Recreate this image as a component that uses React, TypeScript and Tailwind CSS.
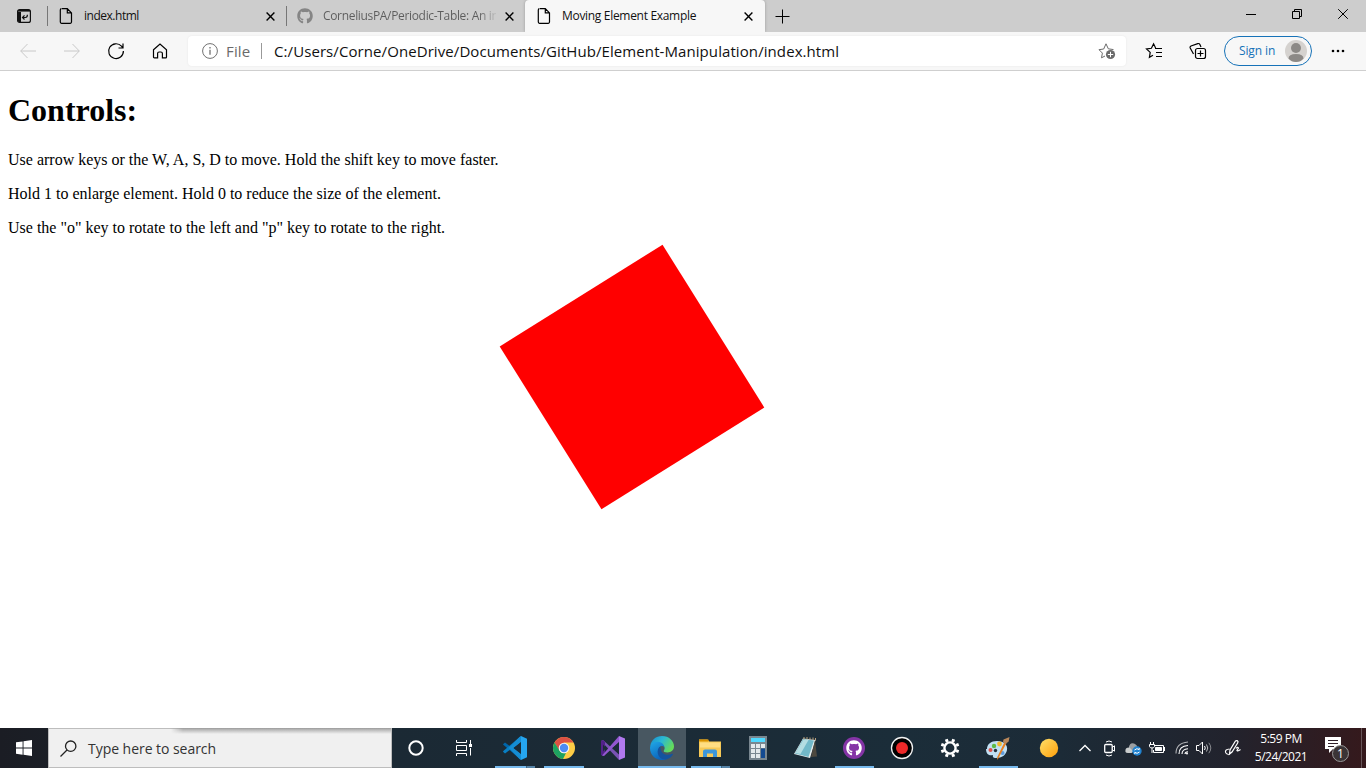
import React from "react";
import { FaGithub } from "react-icons/fa";

type IconProps = {
  w: number;
  h?: number;
  className?: string;
  stroke?: string;
  sw?: number;
  children: React.ReactNode;
};

function Icon({ w, h = w, className = "", stroke = "currentColor", sw = 1, children }: IconProps) {
  return (
    <svg
      width={w}
      height={h}
      viewBox={`0 0 ${w} ${h}`}
      fill="none"
      stroke={stroke}
      strokeWidth={sw}
      className={`block shrink-0 ${className}`}
    >
      {children}
    </svg>
  );
}

const FileIcon = () => (
  <Icon w={14} h={16} sw={1.2}>
    <path d="M3 .7h5.3l4.2 4.2v9.2q0 1.2-1.2 1.2H2.5q-1.2 0-1.2-1.2V1.9Q1.300 .7 2.500 .7M8.300 .7v4.200h4.200" />
  </Icon>
);

const CloseIcon = () => (
  <Icon w={9} sw={1.4}>
    <path d="M.6 .6l7.800 7.800M8.400 .6L.6 8.400" />
  </Icon>
);

function TabStrip() {
  return (
    <div className="flex h-8 bg-[#cdcdcd] text-black">
      <div className="flex w-[47px] items-center pl-[17px]">
        <Icon w={14} className="text-[#111]">
          <rect x=".6" y=".6" width="12.800" height="12.800" rx="2" strokeWidth="1.200" />
          <path d="M1 1.800h12" strokeWidth="1.600" />
          <path d="M1 3h3v10H2q-1 0-1-1z" fill="currentColor" stroke="none" />
          <path d="M5.500 8.500h3q1.900 0 1.900-2.700M7.500 6.300L5.500 8.500l2 2" strokeWidth="1.200" />
        </Icon>
      </div>
      <div className="mt-1.5 h-5 w-px bg-[#777]" />
      <div className="flex w-[238px] items-center pl-[11px]">
        <FileIcon />
        <span className="ml-[11px] flex-1 text-[12px] leading-4 tracking-[-0.48px] text-[#111]">index.html</span>
        <div className="mr-[11px]"><CloseIcon /></div>
      </div>
      <div className="mt-1.5 h-5 w-px bg-[#777]" />
      <div className="flex w-[238px] items-center pl-[10px]">
        <FaGithub className="size-4 shrink-0 text-[#858585]" />
        <span className="ml-[10px] w-[173px] bg-gradient-to-r from-[#5c5c5c] from-90% to-[#c0c0c0] bg-clip-text text-[12px] leading-4 tracking-[-0.33px] whitespace-nowrap text-transparent">
          CorneliusPA/Periodic-Table: An in
        </span>
        <div className="ml-[9px]"><CloseIcon /></div>
      </div>
      <div className="flex w-[240px] items-center rounded-t-[4px] bg-[#f7f7f7] pl-3 shadow-[0_0_3px_#999] [clip-path:inset(0_-4px_0_-4px)]">
        <FileIcon />
        <span className="ml-[11px] flex-1 text-[12px] leading-4 tracking-[-0.31px] whitespace-nowrap text-[#111]">Moving Element Example</span>
        <div className="mr-3"><CloseIcon /></div>
      </div>
      <div className="flex w-[34px] items-center justify-center">
        <Icon w={15}><path d="M7.500 .5v14M.5 7.500h14" /></Icon>
      </div>
      <div className="ml-auto flex h-7 items-center">
        <div className="flex w-[46px] justify-center"><Icon w={10}><path d="M0 5.500h10" /></Icon></div>
        <div className="flex w-[46px] justify-center">
          <Icon w={10}><path d="M.5 2.500h7v7h-7zM2.500 2.500v-2h7v7h-2" /></Icon>
        </div>
        <div className="flex w-[46px] justify-center"><Icon w={10}><path d="M.2 .2l9.600 9.600M9.800 .2L.2 9.800" /></Icon></div>
      </div>
    </div>
  );
}

function Toolbar() {
  return (
    <div className="flex h-[39px] items-center border-b border-[#cfcfcf] bg-[#f7f7f7]">
      <div className="flex w-[188px] pl-1.5 text-black">
        <div className="flex w-11 items-center justify-center text-[#c8c8c8]">
          <Icon w={16}><path d="M16 8H.8M7.500 1L.7 8l6.800 7" /></Icon>
        </div>
        <div className="flex w-11 items-center justify-center text-[#c8c8c8]">
          <Icon w={16}><path d="M0 8h15.200M8.500 1l6.800 7-6.800 7" /></Icon>
        </div>
        <div className="flex w-11 items-center justify-center">
          <Icon w={18} sw={1.2}><path d="M16.400 9A7.400 7.400 0 1 1 14.500 4.200L16 6M16 1.500V6h-4.500" /></Icon>
        </div>
        <div className="flex w-11 items-center justify-center">
          <Icon w={16} sw={1.2}><path d="M1.500 6.800L8 1.100l6.500 5.700v7.100q0 .9-.9.900H10.400v-4.300q0-1.500-1.500-1.500H7.100q-1.500 0-1.500 1.500v4.300H2.400q-.9 0-.9-.9z" /></Icon>
        </div>
      </div>
      <div className="flex h-[30px] w-[938px] items-center rounded bg-white pl-3.5 shadow-[0_0_2px_#e4e4e4]">
        <Icon w={16} className="text-[#717171]">
          <circle cx="8" cy="8" r="7.400" />
          <path d="M8 6.800v5M8 4v1.400" strokeWidth="1.300" />
        </Icon>
        <span className="ml-2 w-[27px] text-[15px] leading-5 tracking-[0.15px] text-[#6a6a6a]">File</span>
        <div className="ml-2 h-4 w-px bg-[#999]" />
        <span className="ml-3 flex-1 text-[15px] leading-5 tracking-[0.083px] whitespace-nowrap text-[#111]">
          C:/Users/Corne/OneDrive/Documents/GitHub/Element-Manipulation/index.html
        </span>
        <Icon w={18} className="mr-[10px] text-[#6b6b6b]">
          <path d="M7 14l-3.500 1.800.9-4.700L1 7.700l4.700-.7L8 1.800l2.300 5 5.200.8" />
          <circle cx="12.500" cy="12.500" r="4.600" fill="currentColor" stroke="none" />
          <path d="M12.500 9.800v5.400M9.800 12.500h5.400" stroke="white" />
        </Icon>
      </div>
      <div className="flex flex-1 items-center text-black">
        <Icon w={18} className="ml-[19px]" sw={1.2}>
          <path d="M8 13.300l-3.600 2 .8-4.900L1.500 7l4.900-.7L8.600 1.800l2 4.100M10 6.500h7M11 10.500h6M11 14.500h6" />
        </Icon>
        <Icon w={18} className="ml-[26px]" sw={1.2}>
          <path d="M4.500 12L1.200 6Q.7 4.700 2 4L8.800 1.600Q10.300 1.200 10.900 2.400L12 5" />
          <rect x="6.500" y="6.500" width="10" height="10" rx="2" />
          <path d="M11.500 8.500v6M8.500 11.500h6" />
        </Icon>
        <div className="ml-[17px] flex h-[30px] w-[88px] items-center rounded-full border border-[#1672b8]">
          <span className="ml-3.5 text-[12px] leading-4 tracking-[-0.12px] whitespace-nowrap text-[#1672b8]">Sign in</span>
          <Icon w={22} stroke="none" className="mr-1 ml-auto">
            <circle cx="11" cy="11" r="11" fill="#d5d2cf" />
            <circle cx="11" cy="8" r="5" fill="#8c8986" />
            <path d="M3.500 18.500q0-4.500 7.500-4.500t7.500 4.500Q15.500 22 11 22t-7.500-3.500z" fill="#8c8986" />
          </Icon>
        </div>
        <Icon w={14} h={4} stroke="none" className="ml-[19px]">
          <g fill="black"><circle cx="2" cy="2" r="1.300" /><circle cx="7" cy="2" r="1.300" /><circle cx="12" cy="2" r="1.300" /></g>
        </Icon>
      </div>
    </div>
  );
}

function Page() {
  return (
    <main className="relative flex-1 overflow-hidden bg-white px-2 pt-[21px] font-['Liberation_Serif',serif] text-black">
      <h1 className="mb-[22px] text-[32px] leading-[37px] font-bold">Controls:</h1>
      <p className="mb-4 text-[16px] leading-[18px]">Use arrow keys or the W, A, S, D to move. Hold the shift key to move faster.</p>
      <p className="mb-4 text-[16px] leading-[18px]">Hold 1 to enlarge element. Hold 0 to reduce the size of the element.</p>
      <p className="text-[16px] leading-[18px]">Use the "o" key to rotate to the left and "p" key to rotate to the right.</p>
      <div className="absolute top-[210px] left-[536px] size-48 -rotate-32 bg-[#ff0000]" />
    </main>
  );
}

type TaskProps = {
  className?: string;
  bar?: "full" | "single" | "multi";
  barWidth?: string;
  children: React.ReactNode;
};

function Task({ className = "", bar, barWidth = "w-[39px]", children }: TaskProps) {
  return (
    <div className={`flex h-10 w-12 shrink-0 flex-col items-center ${className}`}>
      <div className="flex h-[38px] items-center justify-center pt-0.5">{children}</div>
      {bar === "full" && <div className="h-0.5 w-12 bg-[#76b9ed]" />}
      {bar === "single" && <div className={`h-0.5 bg-[#76b9ed] ${barWidth}`} />}
      {bar === "multi" && (
        <div className={`flex h-0.5 ${barWidth}`}>
          <div className="flex-1 bg-[#76b9ed]" />
          <div className="w-px bg-[#3f6580]" />
          <div className="w-2 bg-[#5583a7]" />
        </div>
      )}
    </div>
  );
}

function Tasks() {
  return (
    <>
      <Task>
        <Icon w={16} stroke="white" sw={2}><circle cx="8" cy="8" r="6.700" /></Icon>
      </Task>
      <Task>
        <Icon w={16} stroke="white">
          <path d="M.5 0v2.500h10V0M.5 16v-2.500h10V16M.5 5.500h10v5H.5zM14.500 0v4M14.500 8v7.500" />
          <path d="M13 4h3v3h-3z" fill="white" stroke="none" />
        </Icon>
      </Task>
      <Task className="ml-[3px]" bar="multi" barWidth="w-10">
        <Icon w={24} stroke="none">
          <path d="M0 8.200L2 6.500 18 18.500V24L.3 8.800z" fill="#0065a9" />
          <path d="M0 15.700L2 17.500 18 5.500V0L.3 15z" fill="#087fc4" />
          <path d="M18 0l6 2.800v18.400L18 24z" fill="#25a5ef" />
          <path d="M16.500 1L18 0v6l-7.500 6 7.500 6v6l-1.500-1L5.800 12z" fill="#158dd3" />
          <path d="M18 6.500v11L10.800 12z" fill="#1b2b36" />
        </Icon>
      </Task>
      <Task className="ml-px" bar="single" barWidth="w-10">
        <Icon w={22} stroke="none">
          <circle cx="11" cy="11" r="11" fill="#ffcd46" />
          <path d="M1.500 5.500A11 11 0 0 1 20.500 5.500H11L6 13.500z" fill="#dd5144" />
          <path d="M1.500 5.500L6.500 13.500Q8.500 17 13 16L10 22A11 11 0 0 1 1.500 5.500z" fill="#1da261" />
          <circle cx="11" cy="11" r="5.300" fill="#f5f5f5" />
          <circle cx="11" cy="11" r="4.200" fill="#4c8bf5" />
        </Icon>
      </Task>
      <Task className="ml-px">
        <Icon w={24} stroke="none">
          <path d="M0 5l2-1 16 14.500V24z" fill="#7952b4" />
          <path d="M0 5v14l2 1 2-2V6L2 4z" fill="#52218a" />
          <path d="M1 19.500L18 0v6L3 20z" fill="#9357cf" />
          <path d="M18 0l6 2.500v19L18 24z" fill="#b179ef" />
          <path d="M18 6.500v11L11.500 12z" fill="#1b2b36" />
          <path d="M2 8.500v7L5 12z" fill="#1b2b36" />
        </Icon>
      </Task>
      <Task className="ml-px bg-[#485761]" bar="full">
        <Icon w={24} stroke="none">
          <defs>
            <linearGradient id="edgeTop" x1="0" y1="0" x2="1" y2=".5">
              <stop offset="0" stopColor="#178bd0" /><stop offset=".5" stopColor="#2bb9d4" /><stop offset="1" stopColor="#64db5b" />
            </linearGradient>
            <linearGradient id="edgeSide" x1="0" y1="0" x2=".5" y2="1">
              <stop offset="0" stopColor="#20a8e7" /><stop offset="1" stopColor="#0b63bb" />
            </linearGradient>
          </defs>
          <path d="M.3 10C1 4 6 0 12 0c7 0 12 5 12 10.300 0 4-3 6.200-6.500 6.200-3 0-4.300-1-3.700-2 1-1.200 1.100-2.600.4-4C12.500 6.500 5 5 .3 10z" fill="url(#edgeTop)" />
          <path d="M0 12C.2 7.500 4 5.800 7.300 5.800c3.500 0 6.500 2 7 4.900C10 8.500 7.300 13 9 17c1.500 4 5 5.500 7.800 6C8 26.300 0 20.500 0 12z" fill="url(#edgeSide)" />
          <path d="M10.500 10.200C5.500 13 7 23 15 23.600c3.300 0 6.500-2.500 8-5.300.3-.6-.2-.8-.7-.5C15.500 21 9.800 16.500 10.500 10.200z" fill="#15539e" />
        </Icon>
      </Task>
      <Task bar="multi">
        <Icon w={22} h={20} stroke="none">
          <path d="M0 1.500h8.500l1.800 2H22V19H0z" fill="#f7c957" />
          <path d="M0 1.500h9.500v2H0z" fill="#d99200" />
          <path d="M1 4.500h20v5H1z" fill="#ffde83" />
          <path d="M4 19v-5.500q0-2 2-2h10q2 0 2 2V19h-4v-3.500H8V19z" fill="#3c96da" />
        </Icon>
      </Task>
      <Task>
        <Icon w={18} h={24} stroke="none">
          <rect width="18" height="24" fill="#798790" />
          <rect x="2" y="2" width="14" height="4" fill="#50d9ff" />
          <g fill="#e3e9eb">
            <path d="M2 8h4v4H2zM7 8h4v4H7zM12 8h4v4h-4zM2 13h4v4H2zM7 13h4v4H7zM2 18h4v4H2zM7 18h4v4H7z" />
          </g>
          <path d="M12 12.500h4V22h-4z" fill="#134a91" />
        </Icon>
      </Task>
      <Task>
        <Icon w={24} h={24} stroke="none">
          <path d="M9 2.500L21.500 4 16 22 0 18z" fill="#e9edec" />
          <path d="M9 3L20 4.500 14.500 21 1 17.500z" fill="#72b9c9" />
          <path d="M9.500 3.500l5 .5-8 14-5-1z" fill="#b4dde2" />
          <path d="M21 4l2 16.500-6 .5z" fill="#4e493f" />
          <path d="M10 1v2.500M13 1v2.500M16 1.500V4M19 1.500V4M21.500 2v2.500" stroke="#bba27d" />
        </Icon>
      </Task>
      <Task bar="single">
        <div className="flex size-[22px] items-center justify-center rounded-full bg-[#8534a6]">
          <FaGithub className="size-4 text-white" />
        </div>
      </Task>
      <Task>
        <Icon w={24} stroke="none">
          <circle cx="12" cy="12" r="10.500" fill="black" stroke="#f1f1f1" strokeWidth="1.300" />
          <circle cx="12" cy="12" r="6" fill="#ed2929" />
        </Icon>
      </Task>
      <Task>
        <Icon w={20} stroke="white" sw={3}>
          <circle cx="10" cy="10" r="5.600" strokeWidth="2.400" />
          <path d="M7.300 4L6.300 1.300M12.700 4l1-2.700M7.300 16l-1 2.700M12.700 16l1 2.700M4 7.300L1.300 6.300M4 12.700l-2.700 1M16 7.300l2.700-1M16 12.700l2.700 1" />
        </Icon>
      </Task>
      <Task bar="single">
        <Icon w={24} stroke="none">
          <path d="M1 13C1 8 5 5 11 5c7 0 11 4 10 9-1 5-5 8-11 8-3 0-3.500-1-3-3-3 1-7 0-7-6z" fill="#c1e0f3" />
          <circle cx="4.500" cy="14" r="2" fill="#df524a" />
          <circle cx="8" cy="10" r="2.200" fill="#5ebb46" />
          <circle cx="13.500" cy="8" r="2.400" fill="#f4b830" />
          <circle cx="9.500" cy="14.500" r="1.700" fill="#24323d" />
          <circle cx="16.500" cy="17" r="2" fill="#5e9cdd" />
          <path d="M12 23l-1 .8.4-3L18.500 6l2 1z" fill="#e78122" />
          <path d="M17.500 3.500L23.500 1l-.8 4.500L19.500 8 17 6z" fill="#b8875a" />
        </Icon>
      </Task>
    </>
  );
}

function Tray() {
  return (
    <div className="flex flex-1 items-center text-white">
      <Icon w={20} stroke="none" className="ml-[17px]">
        <defs><linearGradient id="sun" x1="0" y1="0" x2="1" y2="1"><stop stopColor="#ffe06a" /><stop offset="1" stopColor="#ff9f0a" /></linearGradient></defs>
        <circle cx="10" cy="10" r="9.200" fill="url(#sun)" />
      </Icon>
      <Icon w={12} h={8} className="ml-5" sw={1.3}><path d="M.5 7L6 1.500 11.500 7" /></Icon>
      <Icon w={12} h={17} className="ml-[13px]">
        <path d="M2 2Q5 0 8 2M2 15Q5 17 8 15" />
        <rect x=".7" y="4.500" width="7.500" height="8" rx="1" strokeWidth="1.300" />
        <path d="M8 7.500l2.500-1.700v5.400L8 9.500" />
      </Icon>
      <Icon w={18} h={14} className="mt-0.5 ml-[9px]" stroke="none">
        <path d="M.5 10Q-.2 5.500 4 5.500 5 1 9 2.500q3 1 2.500 4.500L6.500 11H3Q1 11 .5 10z" fill="#c9cccd" />
        <path d="M4 5Q5 0 9 1.500t3 5L8 9z" fill="#9b9fa2" />
        <circle cx="12" cy="9" r="4.700" fill="#2182cf" />
        <path d="M9.500 8q2.500-2.500 4.700-.3V6M14.500 10Q12 12.500 9.800 10.300V12" fill="none" stroke="white" />
      </Icon>
      <Icon w={17} h={13} className="ml-[6px]">
        <path d="M6 3.500h8.500v7H4.500V8M15.500 5v4" />
        <path d="M6.500 5.500h6v3h-6z" fill="currentColor" />
        <path d="M1.500 0v2M4.500 0v2M.5 2.500h5v2Q5 6 3 6T.5 4.500zM3 6v5" />
      </Icon>
      <Icon w={14} h={14} className="ml-[9px]" sw={1.1}>
        <path d="M1 12.500Q1 2 13 1" opacity=".65" /><path d="M4 13Q4 5 13 4.500M7 13q0-5 6-5.300M10 13q0-2 3-2.200" />
        <circle cx="12" cy="12.500" r="1" fill="currentColor" stroke="none" />
      </Icon>
      <Icon w={17} h={14} className="ml-[7px]">
        <path d="M.5 4.500H3L6.500 1v12L3 9.500H.5zM8.500 5q1.500 2 0 4" />
        <path d="M10.500 3.500q2.500 3.500 0 7" opacity=".7" /><path d="M12.800 1.800q4 5.200 0 10.400" opacity=".45" />
      </Icon>
      <Icon w={18} h={18} className="ml-[11px]" sw={1.2}>
        <path d="M5.500 15L6 11 11.500 2q1.500-1 2.500.5 0 1-.5 1.800L8 13zM5.500 10Q1 10.500 1.500 13T6 15.500M12 9.500q1.500-2 2.500-.5L13 11.500q1 1 3.500-1" />
      </Icon>
      <div className="ml-[11px] flex w-[56px] flex-col text-center text-[12px] leading-[18px] whitespace-nowrap">
        <span className="tracking-[-0.5px]">5:59 PM</span>
        <span className="tracking-[-0.5px]">5/24/2021</span>
      </div>
      <div className="relative ml-4 h-6 w-[25px]">
        <Icon w={17} h={17} stroke="none">
          <path d="M0 1h16v12H8l-4 4v-4H0z" fill="white" />
          <path d="M3 4.500h10M3 7.500h10M3 10.500h6" stroke="#30212a" />
        </Icon>
        <div className="absolute top-[9px] left-[7px] flex size-[17px] items-center justify-center rounded-full border border-[#999] bg-[#3b3436] text-[12px] leading-none">1</div>
      </div>
      <div className="mr-1 ml-auto h-10 w-px bg-[#675558]" />
    </div>
  );
}

function Taskbar() {
  return (
    <div className="flex h-10 bg-[linear-gradient(90deg,#1b1d24_0,#1b2934_392px,#1b2d39_900px,#1c2b37_1060px,#22232d_1230px,#35191c_1366px)]">
      <div className="flex w-12 items-center justify-center">
        <Icon w={16} stroke="none">
          <path d="M0 2.300L6.600 1.400v6.200H0zM7.500 1.300L16 0v7.600H7.500zM0 8.500h6.600v6.200L0 13.800zM7.500 8.500H16V16l-8.500-1.200z" fill="white" />
        </Icon>
      </div>
      <div className="relative flex w-[344px] items-center border border-[#bdbdbd] bg-[#f0f0f0] pl-[11px]">
        <div className="absolute -top-px right-0 left-[122px] h-1.5 bg-gradient-to-b from-[#a0a0a0] to-transparent [mask-image:linear-gradient(90deg,transparent,black_12px)]" />
        <Icon w={17} className="text-[#222]" sw={1.3}>
          <circle cx="10.700" cy="6.200" r="5.200" /><path d="M7 10l-6.500 6.500" />
        </Icon>
        <span className="mt-0.5 ml-[11px] text-[14px] leading-5 tracking-[-0.04px] text-[#333]">Type here to search</span>
      </div>
      <Tasks />
      <Tray />
    </div>
  );
}

export default function App() {
  return (
    <div className="flex h-[768px] w-[1366px] flex-col overflow-hidden font-['Open_Sans',sans-serif]">
      <TabStrip />
      <Toolbar />
      <Page />
      <Taskbar />
    </div>
  );
}
